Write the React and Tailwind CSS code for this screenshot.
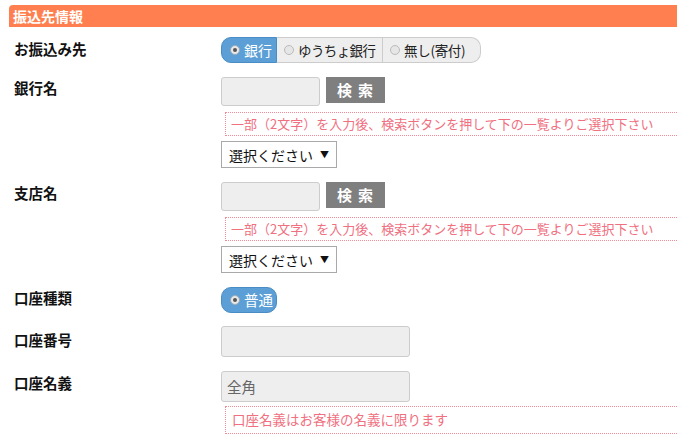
import React from "react";

const font = { fontFamily: '"Noto Sans CJK JP", "Noto Sans", sans-serif' };

function Radio({ checked, onBlue }) {
  return (
    <span
      className={`inline-flex shrink-0 items-center justify-center w-[10px] h-[10px] rounded-full border ${
        onBlue ? "border-[#9ab] bg-[#e8e8e8]" : "border-[#bbb] bg-[#e6e6e6]"
      }`}
    >
      {checked && <span className="w-[4px] h-[4px] rounded-full bg-[#555]" />}
    </span>
  );
}

function Label({ children, pt = "pt-[1px]" }) {
  return (
    <div className={`w-[207px] shrink-0 text-[14.5px] leading-[20px] font-bold text-[#111] ${pt}`}>
      {children}
    </div>
  );
}

function Note({ children }) {
  return (
    <div className="ml-[4px] w-[520px] h-[24px] border border-dotted border-[#f28a98] pl-[5px] text-[13px] leading-[22px] text-[#f0707f] whitespace-nowrap">
      {children}
    </div>
  );
}

function SearchBlock() {
  return (
    <div className="flex flex-col">
      <div className="flex items-start gap-[6px]">
        <div className="w-[99px] h-[29px] bg-[#eeeeee] border border-[#cccccc] rounded-[3px]" />
        <div className="w-[59px] h-[26px] bg-[#7f7f7f] text-white font-bold text-[15px] leading-[26px] text-center tracking-[6px] pl-[5px]">
          検索
        </div>
      </div>
      <div className="mt-[6px]">
        <Note>一部（2文字）を入力後、検索ボタンを押して下の一覧よりご選択下さい</Note>
      </div>
      <div className="mt-[5px] w-[116px] h-[27px] border border-[#a9a9a9] bg-white flex items-center pl-[7px] pr-[7px] text-[14px] text-[#111]">
        <span className="flex-1 leading-[20px] whitespace-nowrap">選択ください</span>
        <span className="text-[9px] leading-none">▼</span>
      </div>
    </div>
  );
}

export default function App() {
  return (
    <div className="w-[677px] h-[434px] overflow-hidden bg-white" style={font}>
      <div className="pt-[5px] pl-[9px]">
        <div className="w-[700px] h-[22px] bg-[#ff7f50] rounded-tl-[4px] pl-[4px] text-white font-bold text-[14px] leading-[22px]">
          振込先情報
        </div>
      </div>

      <div className="pl-[14px] pt-[10px] flex flex-col">
        {/* Row 1 */}
        <div className="flex items-start">
          <Label pt="pt-[2px]">お振込み先</Label>
          <div className="flex h-[26px] text-[14px] leading-[24px] whitespace-nowrap">
            <div className="w-[56px] bg-[#5b9fd6] border border-[#4a8cc4] rounded-l-[10px] text-white flex items-center gap-[4px] pl-[8px]">
              <Radio checked onBlue />
              <span>銀行</span>
            </div>
            <div className="w-[106px] bg-[#eeeeee] border border-l-0 border-[#cccccc] text-[#222] flex items-center gap-[4px] pl-[7px]">
              <Radio />
              <span className="text-[13.5px] tracking-[-0.6px]">ゆうちょ銀行</span>
            </div>
            <div className="w-[98px] bg-[#eeeeee] border border-l-0 border-[#cccccc] rounded-r-[10px] text-[#222] flex items-center gap-[4px] pl-[7px]">
              <Radio />
              <span className="text-[13.5px] tracking-[-0.3px]">無し(寄付)</span>
            </div>
          </div>
        </div>

        {/* Row 2 */}
        <div className="flex items-start mt-[14px]">
          <Label>銀行名</Label>
          <SearchBlock />
        </div>

        {/* Row 3 */}
        <div className="flex items-start mt-[14px]">
          <Label>支店名</Label>
          <SearchBlock />
        </div>

        {/* Row 4 */}
        <div className="flex items-start mt-[14px]">
          <Label>口座種類</Label>
          <div className="w-[56px] h-[26px] bg-[#5b9fd6] border border-[#4a8cc4] rounded-[10px] text-white flex items-center gap-[4px] pl-[8px] text-[14.5px] leading-[24px]">
            <Radio checked onBlue />
            <span>普通</span>
          </div>
        </div>

        {/* Row 5 */}
        <div className="flex items-start mt-[13px]">
          <Label pt="pt-[4px]">口座番号</Label>
          <div className="w-[189px] h-[31px] bg-[#eeeeee] border border-[#cccccc] rounded-[3px]" />
        </div>

        {/* Row 6 */}
        <div className="flex items-start mt-[14px]">
          <Label pt="pt-[2px]">口座名義</Label>
          <div className="flex flex-col">
            <div className="w-[189px] h-[31px] bg-[#eeeeee] border border-[#cccccc] rounded-[3px] pl-[5px] text-[14.5px] leading-[29px] text-[#666]">
              全角
            </div>
            <div className="mt-[4px]">
              <div className="ml-[4px] w-[520px] h-[28px] border border-dotted border-[#f28a98] pl-[6px] text-[13.5px] leading-[24px] text-[#f0707f] whitespace-nowrap">
                口座名義はお客様の名義に限ります
              </div>
            </div>
          </div>
        </div>
      </div>
    </div>
  );
}
